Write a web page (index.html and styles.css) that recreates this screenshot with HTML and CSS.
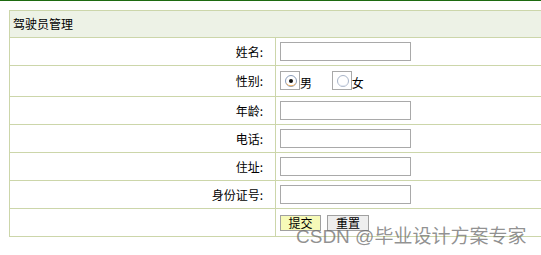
FILE: index.html
```html
<!DOCTYPE html>
<html>
<head>
<meta charset="utf-8">
<link rel="stylesheet" href="styles.css">
</head>
<body>
<div class="topline"></div>
<div class="wrap">
  <table class="form">
    <tr class="head"><td colspan="2">驾驶员管理</td></tr>
    <tr><td class="lbl">姓名:</td><td class="val"><input class="txt" type="text"></td></tr>
    <tr class="radio-row"><td class="lbl">性别:</td><td class="val">
      <span class="rad"><span class="box"><svg width="14" height="14" viewBox="0 0 14 14"><circle cx="7" cy="7" r="5.5" fill="#fff" stroke="#8a9cb8" stroke-width="1"/><path d="M2.5 9.5 A5.5 5.5 0 0 0 11.5 9.5" fill="none" stroke="#f0b060" stroke-width="1"/><circle cx="7" cy="7" r="2" fill="#111"/></svg></span>男</span>
      <span class="rad"><span class="box"><svg width="14" height="14" viewBox="0 0 14 14"><circle cx="7" cy="7" r="5.5" fill="#fff" stroke="#a8b4c8" stroke-width="1"/><path d="M2.5 9.5 A5.5 5.5 0 0 0 11.5 9.5" fill="none" stroke="#dfe4ee" stroke-width="1"/></svg></span>女</span>
    </td></tr>
    <tr><td class="lbl">年龄:</td><td class="val"><input class="txt" type="text"></td></tr>
    <tr><td class="lbl">电话:</td><td class="val"><input class="txt" type="text"></td></tr>
    <tr><td class="lbl">住址:</td><td class="val"><input class="txt" type="text"></td></tr>
    <tr><td class="lbl">身份证号:</td><td class="val"><input class="txt" type="text"></td></tr>
    <tr><td class="lbl"></td><td class="val"><button class="btn submit">提交</button><button class="btn reset">重置</button></td></tr>
  </table>
</div>
<div class="watermark">CSDN @毕业设计方案专家</div>
</body>
</html>
```
FILE: styles.css
```css
html, body {
  margin: 0;
  padding: 0;
  background: #fff;
  overflow: hidden;
}
body {
  font-family: "Noto Sans CJK SC", "Liberation Sans", sans-serif;
  font-size: 12px;
  color: #000;
  position: relative;
  width: 541px;
  height: 255px;
}
.topline {
  height: 1px;
  background: #1d6a10;
}
.wrap {
  padding: 9px 0 0 9px;
}
.form {
  border-collapse: collapse;
  width: 540px;
}
.form td {
  border: 1px solid #ccd6aa;
  padding: 0;
  height: 27px;
  line-height: 14px;
}
.head td {
  background: #edf2e6;
  padding-left: 3px;
  height: 26px;
}
.lbl {
  width: 253px;
  text-align: right;
  padding-right: 12px !important;
}
.val {
  padding-left: 4px !important;
}
.radio-row td {
  height: 30px;
}
.txt {
  display: block;
  box-sizing: border-box;
  width: 131px;
  height: 19px;
  border: 1px solid #a9a9a9;
  margin: 0;
  padding: 0;
  background: #fff;
}
.rad {
  display: inline-flex;
  align-items: flex-end;
  margin-right: 17px;
}
.box {
  display: inline-block;
  box-sizing: border-box;
  width: 20px;
  height: 19px;
  border: 1px solid #a9a9a9;
  padding: 2px 0 0 3px;
}
.box svg {
  display: block;
}
.btn {
  box-sizing: border-box;
  height: 16px;
  width: 42px;
  margin: 0 6px 0 0;
  padding: 0;
  border: 1px solid #a0a0a0;
  font-family: "Noto Sans CJK SC", sans-serif;
  font-size: 12px;
  line-height: 14px;
  vertical-align: middle;
}
.submit {
  background: #f6fab8;
  width: 41px;
}
.reset {
  background: #eeeeee;
}
.watermark {
  position: absolute;
  left: 296px;
  top: 221px;
  font-family: "Liberation Sans", "Noto Sans CJK SC", sans-serif;
  font-size: 19px;
  color: rgba(110, 110, 110, 0.75);
  white-space: nowrap;
}
```
